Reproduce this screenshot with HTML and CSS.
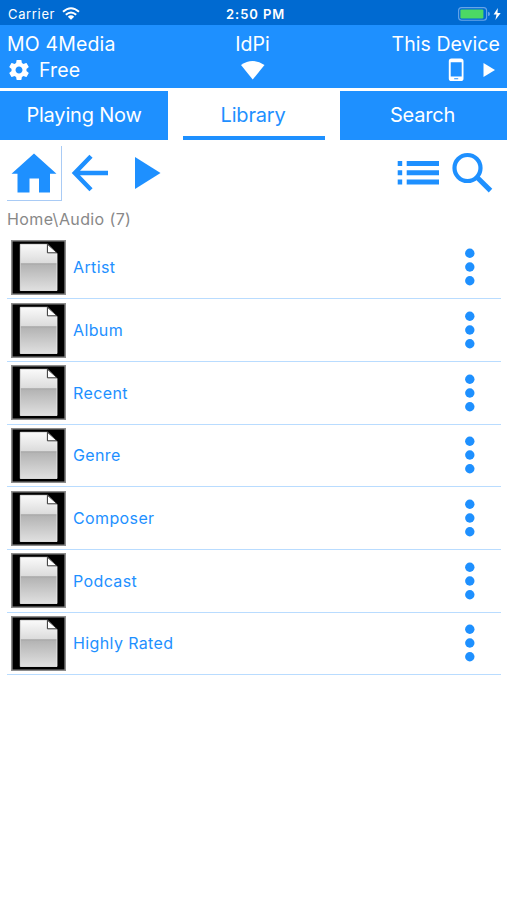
FILE: index.html
```html
<!DOCTYPE html>
<html lang="en">
<head>
<meta charset="utf-8">
<title>MO 4Media</title>
<link rel="stylesheet" href="styles.css">
</head>
<body>
<svg class="defs" width="0" height="0" aria-hidden="true">
  <defs>
    <linearGradient id="sheen" x1="0" y1="0" x2="0" y2="1">
      <stop offset="0" stop-color="#fafafa"/><stop offset=".4" stop-color="#dcdcdc"/>
      <stop offset=".42" stop-color="#a8a8a8"/><stop offset=".46" stop-color="#b5b5b5"/><stop offset="1" stop-color="#e0e0e0"/>
    </linearGradient>
    <symbol id="file" viewBox="0 0 55 55">
      <path fill="#000" stroke="#8c8c8c" stroke-width="1.6" d="M.8.8h53.4v53.4H.8z"/>
      <path fill="url(#sheen)" stroke="#f2f2f2" stroke-width=".8" d="M9.3 4.300h27.200l9.500 9v37.200H9.300z"/>
      <path fill="#fff" stroke="#333" stroke-width="1" d="M36.400 4.200v8.600H46z"/>
    </symbol>
    <symbol id="dots" viewBox="0 0 10 38">
      <circle cx="4.800" cy="5.300" r="4.700"/><circle cx="4.800" cy="19" r="4.700"/><circle cx="4.800" cy="32.700" r="4.700"/>
    </symbol>
  </defs>
</svg>
<div class="status">
  <span class="carrier">Carrier</span>
  <svg class="wifi" width="18" height="13" viewBox="0 0 18 13" fill="none" stroke="#fff" stroke-width="2"><path d="M1 4.800Q9-2.200 17 4.800M3.800 7.700Q9 3.200 14.200 7.700"/><path fill="#fff" stroke="none" d="M5.800 9.700Q9 7 12.200 9.700L9 12.800z"/></svg>
  <span class="time">2:50 PM</span>
  <svg class="battery" width="44" height="14" viewBox="0 0 44 14"><rect x=".6" y=".6" width="28" height="12.600" rx="3" fill="none" stroke="#67a5e8" stroke-width="1.100"/><rect x="2.400" y="2.400" width="23" height="9" rx="1.200" fill="#4cd964"/><path fill="#67a5e8" d="M30 4.700q2 .3 2 2.200t-2 2.200z"/><path fill="#fff" d="M39.800 1L35.600 7.600h2.900L37.400 13l5.300-7h-3.200z"/></svg>
</div>
<header class="header">
  <div class="col">
    <div class="title t-app">MO 4Media</div>
    <div class="sub"><svg width="24" height="24" viewBox="0 0 24 24" fill="#fff"><path d="M19.43 12.98c.04-.32.07-.64.07-.98s-.03-.66-.07-.98l2.11-1.65c.19-.15.24-.42.12-.64l-2-3.46c-.12-.22-.39-.3-.61-.22l-2.49 1c-.52-.4-1.08-.73-1.69-.98l-.38-2.65C14.46 2.18 14.25 2 14 2h-4c-.25 0-.46.18-.49.42l-.38 2.65c-.61.25-1.17.59-1.69.98l-2.49-1c-.23-.09-.49 0-.61.22l-2 3.46c-.13.22-.07.49.12.64l2.11 1.65c-.04.32-.07.65-.07.98s.03.66.07.98l-2.11 1.65c-.19.15-.24.42-.12.64l2 3.46c.12.22.39.3.61.22l2.49-1c.52.4 1.08.73 1.69.98l.38 2.65c.03.24.24.42.49.42h4c.25 0 .46-.18.49-.42l.38-2.65c.61-.25 1.17-.59 1.69-.98l2.49 1c.23.09.49 0 .61-.22l2-3.46c.12-.22.07-.49-.12-.64l-2.11-1.65zM12 15.5c-1.93 0-3.5-1.57-3.5-3.5s1.57-3.5 3.5-3.5 3.5 1.57 3.5 3.5-1.57 3.5-3.5 3.5z"/></svg><span class="free">Free</span></div>
  </div>
  <div class="col center">
    <div class="title">IdPi</div>
    <div class="sub"><svg width="25" height="20" viewBox="0 0 25 20" fill="#fff"><path d="M1 4.900Q12.500-3.100 24.500 4.900L12.700 19.500z"/></svg></div>
  </div>
  <div class="col right">
    <div class="title t-device">This Device</div>
    <div class="sub"><svg width="52" height="24" viewBox="0 0 52 24" fill="#fff"><path fill-rule="evenodd" d="M3.500.5h9.300a2.700 2.700 0 0 1 2.700 2.700v17.200a2.700 2.700 0 0 1-2.700 2.700H3.500a2.700 2.700 0 0 1-2.700-2.700V3.200A2.700 2.700 0 0 1 3.500.5zM2.700 4.200v14.200h11V4.200zM6.200 20.300v1h4v-1z"/><path d="M35.500 5l11.500 7-11.500 7z"/></svg></div>
  </div>
</header>
<nav class="tabs">
  <div class="tab t-play"><span>Playing Now</span></div>
  <div class="tab active"><span>Library</span></div>
  <div class="tab t-search"><span>Search</span></div>
</nav>
<div class="toolbar">
  <div class="home"><svg width="46" height="40" viewBox="0 0 46 40"><path d="M23 .5L45.500 20.800H39V39.500H28V25.500H18.500V39.500H6.500V20.800H.5z"/></svg></div>
  <svg class="back" width="38" height="38" viewBox="0 0 38 38"><path fill="none" stroke="#1e90ff" stroke-width="4.400" d="M37 19H4M20 2.300L3.800 19 20 35.700"/></svg>
  <svg class="play" width="26" height="32" viewBox="0 0 26 32"><path d="M0 0l25.500 16L0 32z"/></svg>
  <svg class="list-icon" width="43" height="24" viewBox="0 0 43 24"><path d="M.7 0h4.500v5H.7zM9.700 0H42v5H9.700zM.7 9.300h4.500v5H.7zM9.700 9.300H42v5H9.700zM.7 18.500h4.500v5H.7zM9.700 18.500H42v5H9.700z"/></svg>
  <svg class="find" width="42" height="42" viewBox="0 0 42 42" fill="none" stroke="#1e90ff"><circle cx="15.500" cy="16" r="13" stroke-width="4.200"/><path stroke-width="5" d="M25.500 25.800L38.500 38.600"/></svg>
</div>
<div class="path"><span>Home\Audio (7)</span></div>
<main class="list">
  <div class="row"><svg class="thumb"><use href="#file"/></svg><span class="name">Artist</span><svg class="more"><use href="#dots"/></svg></div>
  <div class="row"><svg class="thumb"><use href="#file"/></svg><span class="name">Album</span><svg class="more"><use href="#dots"/></svg></div>
  <div class="row"><svg class="thumb"><use href="#file"/></svg><span class="name">Recent</span><svg class="more"><use href="#dots"/></svg></div>
  <div class="row"><svg class="thumb"><use href="#file"/></svg><span class="name">Genre</span><svg class="more"><use href="#dots"/></svg></div>
  <div class="row"><svg class="thumb"><use href="#file"/></svg><span class="name">Composer</span><svg class="more"><use href="#dots"/></svg></div>
  <div class="row"><svg class="thumb"><use href="#file"/></svg><span class="name">Podcast</span><svg class="more"><use href="#dots"/></svg></div>
  <div class="row"><svg class="thumb"><use href="#file"/></svg><span class="name">Highly Rated</span><svg class="more"><use href="#dots"/></svg></div>
</main>
</body>
</html>
```
FILE: styles.css
```css
* { box-sizing: border-box; }
body { margin: 0; background: #fff; font-family: Inter, "Liberation Sans", sans-serif; color: #1e90ff; }
svg { display: block; flex: none; fill: #1e90ff; }
svg[fill="none"] { fill: none; }
svg[fill="#fff"] { fill: #fff; }
.defs { position: absolute; }
.status { height: 25px; background: #006ad1; color: #fff; display: flex; align-items: center; padding: 2px 5px 0 8px; font-size: 13px; }
.carrier { width: 48px; letter-spacing: .65px; }
.wifi { margin-left: 6px; }
.time { margin-left: 146px; font-weight: 600; letter-spacing: .95px; }
.battery { margin-left: auto; }
.header { height: 63px; background: #1e90ff; color: #fff; display: grid; grid-template-columns: 1fr 1fr 1fr; padding: 6px 7px 0; font-size: 19.5px; }
.title { height: 26px; line-height: 26px; white-space: nowrap; }
.t-app { letter-spacing: .15px; }
.t-device { letter-spacing: .05px; }
.sub { height: 26px; display: flex; align-items: center; }
.free { margin-left: 8px; letter-spacing: .15px; }
.center { text-align: center; padding-right: 2px; }
.center .sub { justify-content: center; }
.right { text-align: right; }
.right .sub { justify-content: flex-end; }
.tabs { display: grid; grid-template-columns: 168px 142px 167px; grid-template-rows: 49px; column-gap: 15px; margin-top: 3px; height: 49px; font-size: 20px; }
.tab { background: #1e90ff; color: #fff; text-align: center; line-height: 48px; letter-spacing: -.2px; }
.tab.active { background: #fff; color: #1e90ff; border-bottom: 4px solid #1e90ff; padding-right: 2px; }
.t-search { padding-right: 2px; }
.toolbar { display: flex; align-items: center; height: 64px; padding: 2px 13px 0 7px; }
.home { width: 55px; height: 55px; border-right: 1px solid #a9cbf5; border-bottom: 1px solid #a9cbf5; padding: 7px 0 0 4px; }
.back { margin-left: 9px; }
.play { margin-left: 26px; }
.list-icon { margin-left: auto; }
.find { margin-left: 12px; }
.path { height: 32px; line-height: 30px; padding-left: 7px; color: #888; font-size: 16px; letter-spacing: .38px; }
.list { margin: 0 6px 0 7px; padding-top: .5px; }
.row { height: 62.7px; display: flex; align-items: center; border-bottom: 1.5px solid #b9dcff; padding: 0 26px 0 4px; font-size: 16px; }
.thumb { width: 55px; height: 55px; }
.name { margin-left: 7px; flex: 1; letter-spacing: .38px; }
.more { width: 10px; height: 38px; }
```
